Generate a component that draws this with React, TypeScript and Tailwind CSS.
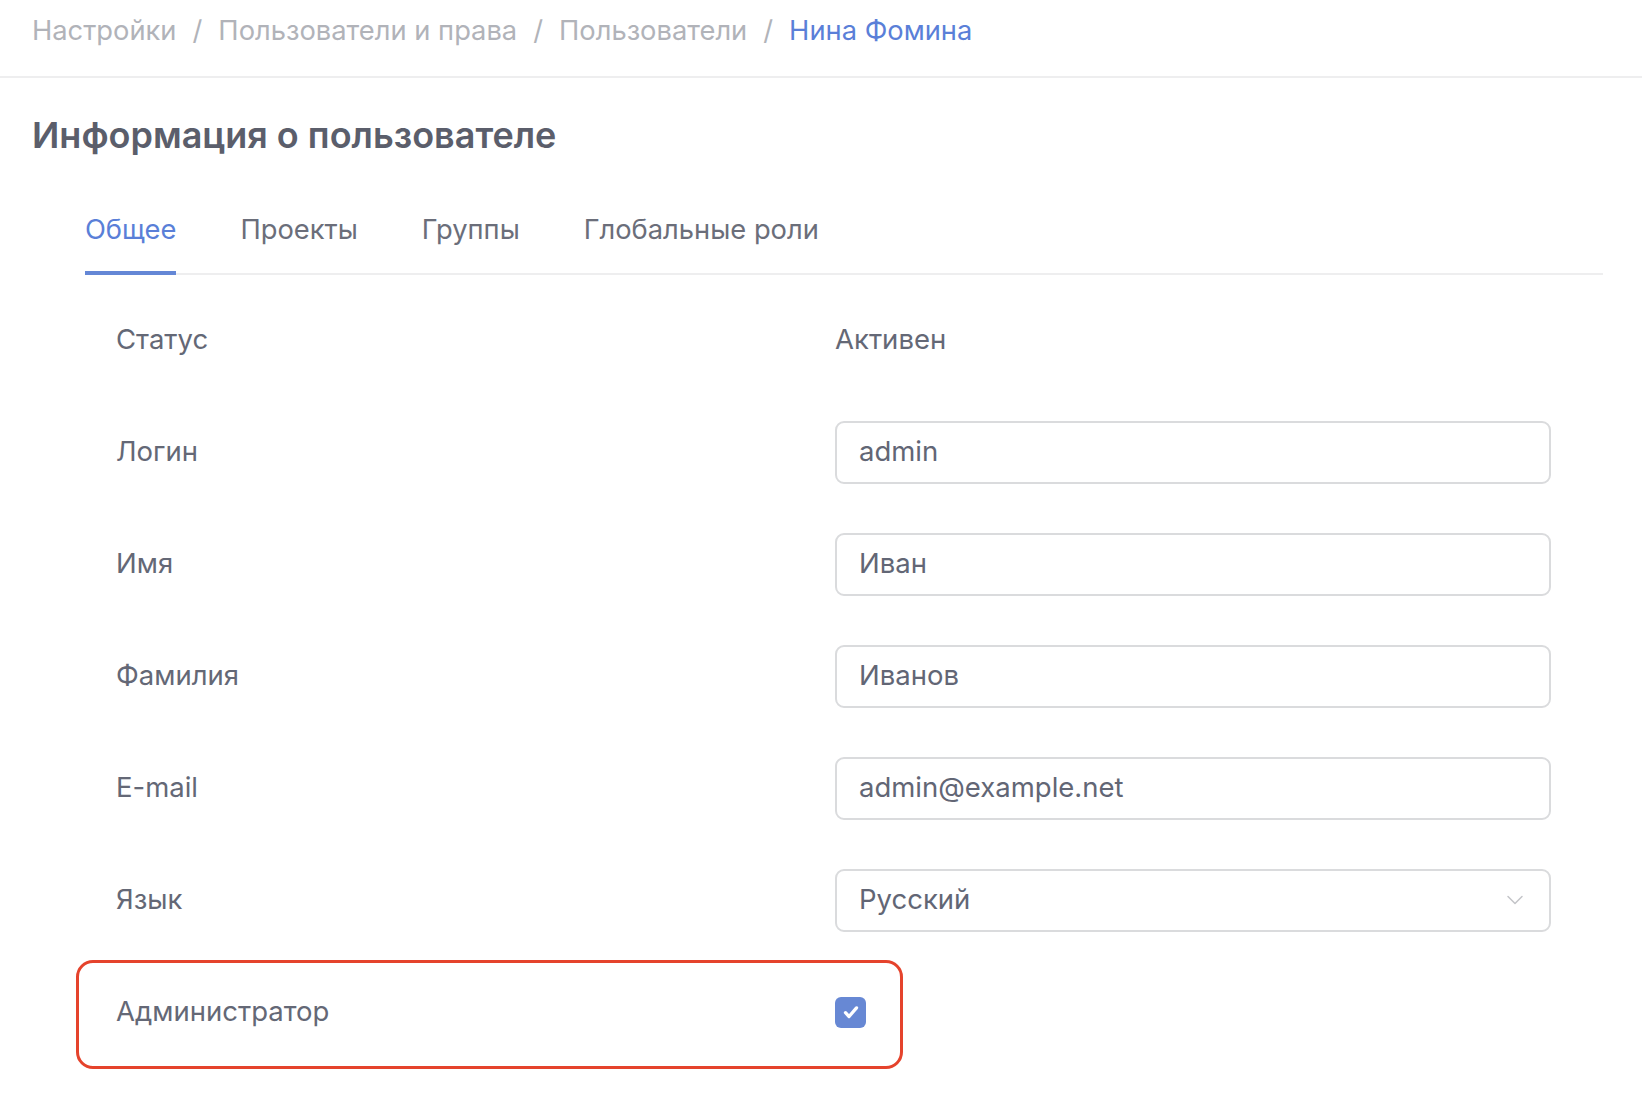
import { ChevronDown } from 'lucide-react';

const crumbs = ['Настройки', 'Пользователи и права', 'Пользователи'];
const tabs = ['Общее', 'Проекты', 'Группы', 'Глобальные роли'];

const fields = [
  { label: 'Логин', value: 'admin' },
  { label: 'Имя', value: 'Иван' },
  { label: 'Фамилия', value: 'Иванов' },
  { label: 'E-mail', value: 'admin@example.net' },
];

const Field = ({ value }: { value: string }) => (
  <div className="w-[716px] h-[63px] rounded-[9px] border-2 border-[#dadbdd] flex items-center px-[22px] text-[27.5px] text-[#626675]">
    {value}
  </div>
);

export default function App() {
  return (
    <div className="min-h-screen bg-white font-['Inter','Liberation_Sans',sans-serif] text-[#646876]">
      {/* хлебные крошки */}
      <div className="h-[78px] border-b-2 border-[#eeeeef] px-[32px] pt-[13px] flex items-start text-[27.3px] leading-[36px]">
        {crumbs.map((c) => (
          <span key={c} className="flex items-center text-[#b1b3b9]">
            {c}
            <span className="mx-[16px]">/</span>
          </span>
        ))}
        <span className="text-[#5a7fd8]">Нина Фомина</span>
      </div>

      <div className="px-[32px]">
        <h1 className="mt-[33px] text-[36px] leading-[48px] font-semibold text-[#5b5e6b]">
          Информация о пользователе
        </h1>

        <div className="ml-[53px] mr-[7px]">
          {/* вкладки */}
          <div className="mt-[53px] flex gap-[64px] border-b-2 border-[#eeeeef]">
            {tabs.map((t, i) => (
              <div
                key={t}
                className={`pb-[23px] text-[27.3px] leading-[36px] -mb-[2px] border-b-[4px] ${
                  i === 0 ? 'text-[#5a7fd8] border-[#6487d6]' : 'text-[#6b6e7a] border-transparent'
                }`}
              >
                {t}
              </div>
            ))}
          </div>

          {/* поля */}
          <div className="mt-[9px] pl-[31px] text-[27.5px]">
            <div className="h-[112px] flex items-center">
              <div className="w-[719px]">Статус</div>
              <div>Активен</div>
            </div>
            {fields.map((f) => (
              <div key={f.label} className="h-[112px] flex items-center">
                <div className="w-[719px]">{f.label}</div>
                <Field value={f.value} />
              </div>
            ))}
            <div className="h-[112px] flex items-center">
              <div className="w-[719px]">Язык</div>
              <div className="w-[716px] h-[63px] rounded-[9px] border-2 border-[#dadbdd] flex items-center justify-between pl-[22px] pr-[20px] text-[27.5px] text-[#626675]">
                Русский
                <ChevronDown className="w-[28px] h-[28px] text-[#c4c5c9]" strokeWidth={1.3} />
              </div>
            </div>
            <div className="relative h-[112px] flex items-center">
              <div className="absolute left-[-40px] top-[4px] w-[827px] h-[109px] rounded-[17px] border-[3px] border-[#e5432c]" />
              <div className="w-[719px]">Администратор</div>
              <div className="w-[31px] h-[31px] rounded-[6px] bg-[#6788d4] flex items-center justify-center">
                <svg viewBox="0 0 16 16" className="w-[22px] h-[22px]" fill="none">
                  <path d="M4 8.5l2.6 2.8 5.4-6.3" stroke="white" strokeWidth="2.4" strokeLinecap="round" strokeLinejoin="round" />
                </svg>
              </div>
            </div>
          </div>
        </div>
      </div>
    </div>
  );
}
